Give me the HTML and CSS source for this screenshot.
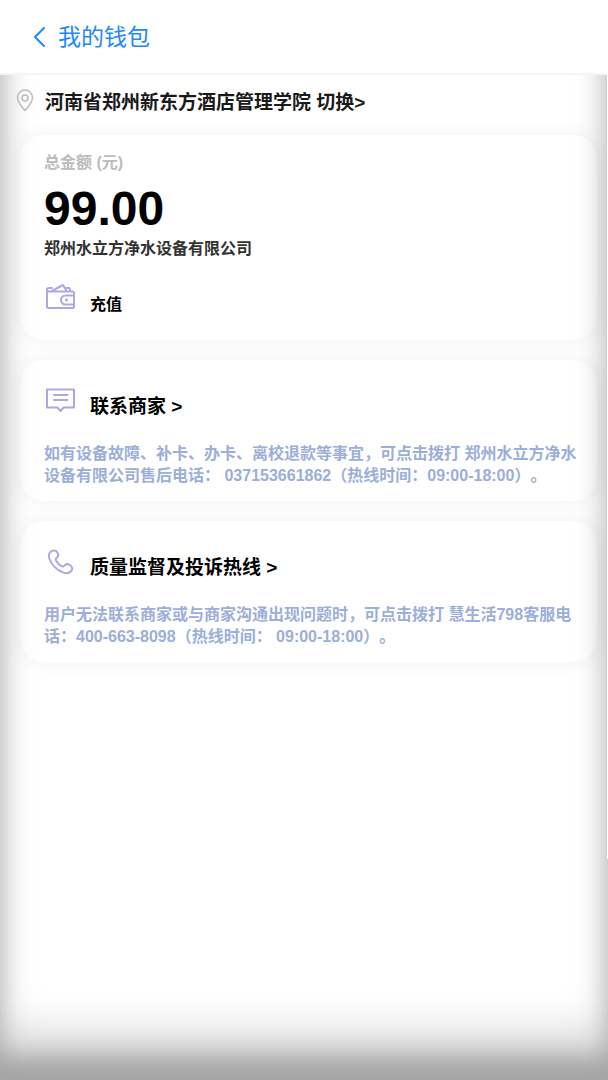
FILE: index.html
```html
<!DOCTYPE html>
<html lang="zh-CN">
    <head>
        <meta charset="utf-8">
        <meta name="viewport" content="width=device-width, initial-scale=1">
        <title>我的钱包</title>
        <link rel="stylesheet" href="styles.css">
    </head>
    <body>
        <header class="header">
            <a class="back" href="#">
                <svg class="backIcon" viewBox="0 0 12 20"><path d="M11 1L2 10l9 9"/></svg>
                <span>我的钱包</span>
            </a>
        </header>
        <main class="content">
            <div class="location">
                <svg class="pin" viewBox="0 0 18 24">
                    <path d="M9 21.500C6 18 1.500 13.500 1.500 8.500a7.500 7.500 0 0 1 15 0C16.500 13.500 12 18 9 21.500z"/>
                    <circle cx="9" cy="9" r="3"/>
                </svg>
                <p class="place">河南省郑州新东方酒店管理学院 <button type="button" class="switch">切换&gt;</button></p>
            </div>

            <section class="card balance">
                <h2 class="label">总金额 (元)</h2>
                <p class="amount">99.00</p>
                <p class="company">郑州水立方净水设备有限公司</p>
                <button type="button" class="action">
                    <svg class="icon" viewBox="0 0 32 32">
                        <path d="M8 4H4.500Q3 4 3 5.500v17Q3 24 4.500 24h24q1.500 0 1.500-1.500V9q0-1.500-1.500-1.500H5Q3 7.500 3 5.500M8 7L19 1l3.500 6M21 4h4.500l1 3.500M30 11.500h-8.500a4.500 4.500 0 0 0 0 9H30"/>
                        <circle class="dot" cx="22.500" cy="16" r="1.500"/>
                    </svg>
                    <span class="small">充值</span>
                </button>
            </section>

            <section class="card">
                <a class="action" href="tel:037153661862">
                    <svg class="icon" viewBox="0 0 32 32">
                        <path d="M3 3.500h27v18H19.500l-3 3.500-3-3.500H3zM10 9h13.500M10 14h13.500"/>
                    </svg>
                    <span>联系商家 &gt;</span>
                </a>
                <p class="info">如有设备故障、补卡、办卡、离校退款等事宜，可点击拨打 郑州水立方净水设备有限公司售后电话： 037153661862（热线时间：09:00-18:00）。</p>
            </section>

            <section class="card">
                <a class="action" href="tel:400-663-8098">
                    <svg class="icon" viewBox="0 0 32 32">
                        <path d="M7 4.500c2.500-1.800 5-1.200 6.500 1.200 1.500 2.300.8 4-1 5.300-1 .8-1 1.600-.2 3 1.300 2.300 2.900 3.800 5 5 1.300.8 2.200.7 3-.3 1.500-1.700 3.400-2.100 5.500-.7 2.800 1.800 3.200 4.300 1 6.500-2 2-4.700 2.200-8.300.7C12 22.500 7.500 17.500 5.300 11.500 4.300 8.300 4.700 6.200 7 4.500z"/>
                    </svg>
                    <span>质量监督及投诉热线 &gt;</span>
                </a>
                <p class="info">用户无法联系商家或与商家沟通出现问题时，可点击拨打 慧生活798客服电话：400-663-8098（热线时间： 09:00-18:00）。</p>
            </section>
        </main>
    </body>
</html>
```
FILE: styles.css
```css
* {
    box-sizing: border-box;
}
body {
    margin: 0;
    min-height: 100vh;
    display: flex;
    flex-direction: column;
    background-color: #fff;
    color: #000;
    font-family: "Liberation Sans", "Noto Sans CJK SC", sans-serif;
    text-spacing-trim: space-all;
}
h2, p {
    margin: 0;
}
button {
    padding: 0;
    border: none;
    background: none;
    color: inherit;
    font: inherit;
    cursor: pointer;
}
a {
    color: inherit;
    text-decoration: none;
}
svg {
    fill: none;
    flex: none;
    stroke-linecap: round;
    stroke-linejoin: round;
}
.header {
    height: 75px;
    padding: 0 33px;
    display: flex;
    align-items: center;
    border-bottom: 2px solid #f5f5f5;
}
.back {
    display: flex;
    align-items: center;
    gap: 13px;
    color: #1e88ff;
    font-size: 23px;
    line-height: 30px;
}
.backIcon {
    width: 12px;
    height: 20px;
    stroke: #1e88ff;
    stroke-width: 2;
}
/* starts under the header, so the top of the inner shadow is cut off */
.content {
    position: relative;
    flex: 1;
    margin-top: -60px;
    padding: 74px 11px 20px 20px;
    display: flex;
    flex-direction: column;
    gap: 20px;
    box-shadow: inset 0 -24px 26px rgba(0, 0, 0, .26), inset 0 -52px 40px rgba(0, 0, 0, .14);
    clip-path: inset(60px 0 0 0);
}
/* scroll indicator */
.content::after {
    content: "";
    position: absolute;
    top: 0;
    right: 0;
    bottom: 221px;
    width: 1px;
    background-color: #fff;
}
.location {
    height: 26px;
    margin-left: -4px;
    display: flex;
    gap: 11px;
}
.pin {
    width: 18px;
    height: 24px;
    stroke: #bbb;
    stroke-width: 1.5;
}
.place {
    color: #1a1a1a;
    font-size: 19px;
    font-weight: bold;
    line-height: 28px;
}
.card {
    padding: 26px 12px 14px 24px;
    border-radius: 24px;
    box-shadow: 0 0 20px rgba(0, 0, 0, .06);
}
.balance {
    padding-top: 17px;
    padding-bottom: 24px;
}
.label {
    color: #bbb;
    font-size: 16px;
    line-height: 22px;
}
.amount {
    margin: 11px 0 5px;
    font-size: 48px;
    font-weight: bold;
    line-height: 48px;
}
.company {
    margin-bottom: 24px;
    color: #333;
    font-size: 16px;
    font-weight: bold;
    line-height: 22px;
}
.action {
    height: 32px;
    display: flex;
    align-items: flex-end;
    gap: 14px;
    font-size: 19px;
    font-weight: bold;
    line-height: 22px;
}
.icon {
    width: 32px;
    height: 32px;
    stroke: #b3a5e3;
    stroke-width: 2;
}
.dot {
    fill: #b3a5e3;
    stroke: none;
}
.small {
    font-size: 16px;
}
.info {
    margin-top: 25px;
    color: #9caed9;
    font-size: 16px;
    font-weight: bold;
    line-height: 22px;
}
```
